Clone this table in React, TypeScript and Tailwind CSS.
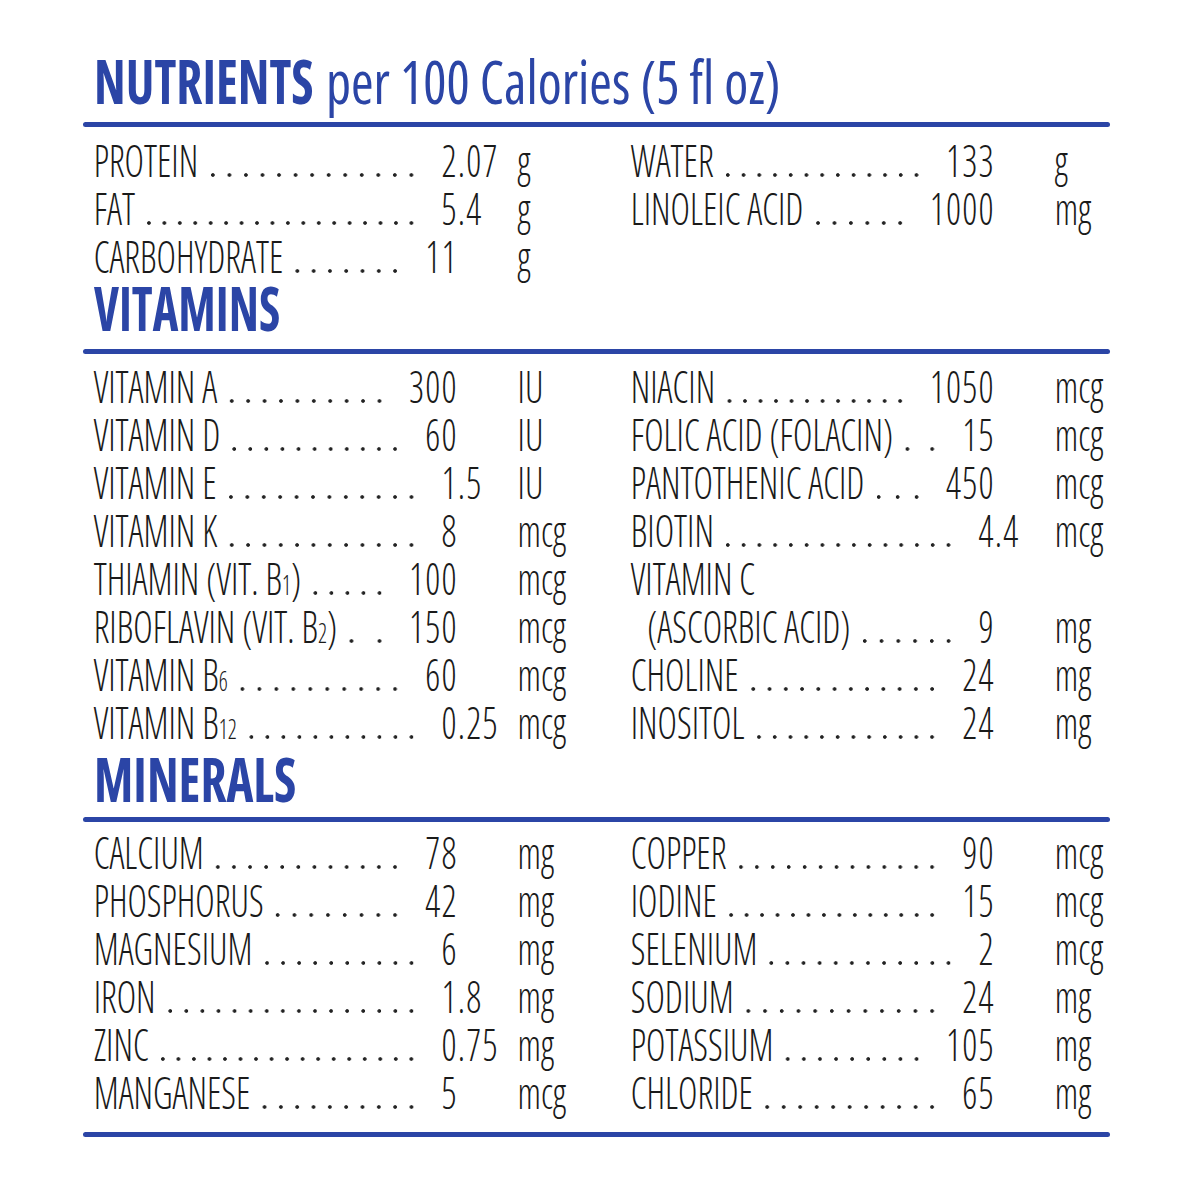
import React from "react";

type Item = { n?: React.ReactNode; v?: string; u?: string; indent?: boolean };

const sub = (t: string) => <span className="text-[27px]">{t}</span>;

const sections: { title?: string; left: Item[]; right: Item[] }[] = [
  {
    left: [
      { n: "PROTEIN", v: "2.07", u: "g" },
      { n: "FAT", v: "5.4", u: "g" },
      { n: "CARBOHYDRATE", v: "11", u: "g" },
    ],
    right: [
      { n: "WATER", v: "133", u: "g" },
      { n: "LINOLEIC ACID", v: "1000", u: "mg" },
    ],
  },
  {
    title: "VITAMINS",
    left: [
      { n: "VITAMIN A", v: "300", u: "IU" },
      { n: "VITAMIN D", v: "60", u: "IU" },
      { n: "VITAMIN E", v: "1.5", u: "IU" },
      { n: "VITAMIN K", v: "8", u: "mcg" },
      { n: <>THIAMIN (VIT. B{sub("1")})</>, v: "100", u: "mcg" },
      { n: <>RIBOFLAVIN (VIT. B{sub("2")})</>, v: "150", u: "mcg" },
      { n: <>VITAMIN B{sub("6")}</>, v: "60", u: "mcg" },
      { n: <>VITAMIN B{sub("12")}</>, v: "0.25", u: "mcg" },
    ],
    right: [
      { n: "NIACIN", v: "1050", u: "mcg" },
      { n: "FOLIC ACID (FOLACIN)", v: "15", u: "mcg" },
      { n: "PANTOTHENIC ACID", v: "450", u: "mcg" },
      { n: "BIOTIN", v: "4.4", u: "mcg" },
      { n: "VITAMIN C" },
      { n: "(ASCORBIC ACID)", v: "9", u: "mg", indent: true },
      { n: "CHOLINE", v: "24", u: "mg" },
      { n: "INOSITOL", v: "24", u: "mg" },
    ],
  },
  {
    title: "MINERALS",
    left: [
      { n: "CALCIUM", v: "78", u: "mg" },
      { n: "PHOSPHORUS", v: "42", u: "mg" },
      { n: "MAGNESIUM", v: "6", u: "mg" },
      { n: "IRON", v: "1.8", u: "mg" },
      { n: "ZINC", v: "0.75", u: "mg" },
      { n: "MANGANESE", v: "5", u: "mcg" },
    ],
    right: [
      { n: "COPPER", v: "90", u: "mcg" },
      { n: "IODINE", v: "15", u: "mcg" },
      { n: "SELENIUM", v: "2", u: "mcg" },
      { n: "SODIUM", v: "24", u: "mg" },
      { n: "POTASSIUM", v: "105", u: "mg" },
      { n: "CHLORIDE", v: "65", u: "mg" },
    ],
  },
];

function Row({ r, side }: { r: Item; side: "l" | "r" }) {
  const [int, frac] = r.v ? r.v.split(".") : ["", undefined];
  return (
    <div className="flex h-[48px]">
      <span className={"shrink-0 whitespace-nowrap " + (r.indent ? "pl-[20px]" : "")}>{r.n}</span>
      {/* dot leader */}
      <div
        className={
          "ml-[8px] mr-[27px] flex-1 " +
          (r.v
            ? "bg-[radial-gradient(ellipse_2.7px_2.2px_at_center,#222_65%,transparent_100%)] bg-[length:18.8px_8px] bg-[position:0_35px] [background-repeat:space_no-repeat]"
            : "")
        }
      />
      <span className="whitespace-nowrap tracking-[1.5px]">{int}</span>
      <span className="w-[73px] tracking-[1.5px]">{frac ? "." + frac : ""}</span>
      <span className={side === "l" ? "w-[113px]" : "w-[67px]"}>{r.u}</span>
    </div>
  );
}

function Rows({ left, right }: { left: Item[]; right: Item[] }) {
  return (
    <div className="w-[1027px]">
      <div className="flex w-[1252px] origin-left scale-x-[0.82] text-[45px] font-[350] leading-[48px] text-[#1a1a1a]">
        <div className="flex w-[643px] flex-col pl-[13px]">
          {left.map((r, i) => (
            <Row key={i} r={r} side="l" />
          ))}
        </div>
        <div className="flex w-[609px] flex-col pl-[25px]">
          {right.map((r, i) => (
            <Row key={i} r={r} side="r" />
          ))}
        </div>
      </div>
    </div>
  );
}

const Rule = ({ className }: { className: string }) => (
  <div className={"h-[5px] w-[1027px] rounded-full bg-[#2b45a6] " + className} />
);

export default function App() {
  return (
    <div className="h-[1200px] w-[1200px] overflow-hidden bg-white font-['Open_Sans',sans-serif] [font-stretch:condensed]">
      <div className="flex flex-col pl-[83px] pt-[51px]">
        {/* Title */}
        <div className="flex h-[60px] items-baseline pl-[11px] text-[60px] leading-[60px] text-[#2b45a6]">
          <span className="w-[232px] shrink-0">
            <span className="inline-block origin-left scale-x-[0.85] whitespace-nowrap font-bold">NUTRIENTS</span>
          </span>
          <span className="inline-block origin-left scale-x-[0.91] whitespace-nowrap">per 100 Calories (5 fl oz)</span>
        </div>
        <Rule className="mt-[11px]" />
        <div className="mt-[9px]">
          <Rows left={sections[0].left} right={sections[0].right} />
        </div>

        {/* Vitamins */}
        <div className="h-[56px] pl-[11px] text-[60px] font-bold leading-[56px] text-[#2b45a6]">
          <span className="inline-block origin-left scale-x-[0.81] whitespace-nowrap">VITAMINS</span>
        </div>
        <Rule className="mt-[13px]" />
        <div className="mt-[8px]">
          <Rows left={sections[1].left} right={sections[1].right} />
        </div>

        {/* Minerals */}
        <div className="mt-[5px] h-[56px] pl-[11px] text-[60px] font-bold leading-[56px] text-[#2b45a6]">
          <span className="inline-block origin-left scale-x-[0.85] whitespace-nowrap">MINERALS</span>
        </div>
        <Rule className="mt-[10px]" />
        <div className="mt-[6px]">
          <Rows left={sections[2].left} right={sections[2].right} />
        </div>
        <Rule className="mt-[16px]" />
      </div>
    </div>
  );
}
